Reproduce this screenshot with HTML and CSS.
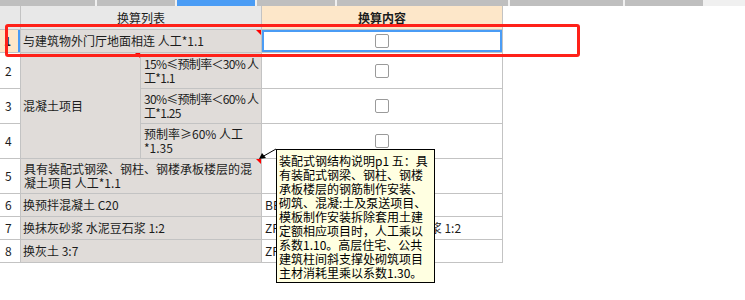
FILE: index.html
```html
<!DOCTYPE html>
<html>
  <head>
    <title>换算</title>
    <link rel="stylesheet" href="styles.css">
  </head>
  <body>
    <div class="tabs">
      <span class="tab t1"></span>
      <span class="tab t2"></span>
      <span class="tab t2 active"></span>
      <span class="tab t2"></span>
      <span class="tab t3"></span>
      <span class="tab t4"></span>
      <span class="tab t2"></span>
    </div>

    <div class="sheet">
      <div class="grid">
        <div class="hd"></div>
        <div class="hd span2 center">换算列表</div>
        <div class="hd hd-warm center bold">换算内容</div>

        <div class="no no-cur">1</div>
        <div class="cell span2 flag">与建筑物外门厅地面相连 人工*1.1</div>
        <div class="val val-cur"><span class="chk"></span></div>

        <div class="no">2</div>
        <div class="cell rows3 flag">混凝土项目</div>
        <div class="cell two tight">15%≤预制率＜30% 人<br>工*1.1</div>
        <div class="val"><span class="chk"></span></div>

        <div class="no">3</div>
        <div class="cell two tight">30%≤预制率＜60% 人<br>工*1.25</div>
        <div class="val"><span class="chk"></span></div>

        <div class="no">4</div>
        <div class="cell two">预制率≥60% 人工<br>*1.35</div>
        <div class="val"><span class="chk"></span></div>

        <div class="no">5</div>
        <div class="cell span2 two flag">具有装配式钢梁、钢柱、钢楼承板楼层的混<br>凝土项目 人工*1.1</div>
        <div class="val"><span class="chk"></span></div>

        <div class="no">6</div>
        <div class="cell span2">换预拌混凝土 C20</div>
        <div class="val txt">BB1-0021 C20</div>

        <div class="no">7</div>
        <div class="cell span2">换抹灰砂浆 水泥豆石浆 1:2</div>
        <div class="val txt">ZF1-0016 换抹灰砂浆 水泥豆石浆 1:2</div>

        <div class="no">8</div>
        <div class="cell span2">换灰土 3:7</div>
        <div class="val txt">ZF1-0049 灰土 3:7</div>
      </div>

      <div class="mark"></div>

      <svg class="pointer" width="22" height="16" viewBox="0 0 22 16">
        <line x1="20" y1="3" x2="6" y2="11" stroke="#000" stroke-width="1"/>
        <polygon points="3,13 6,7 10,12" fill="#000"/>
      </svg>

      <div class="tip">装配式钢结构说明p1 五：具<br>有装配式钢梁、钢柱、钢楼<br>承板楼层的钢筋制作安装、<br>砌筑、混凝:土及泵送项目、<br>模板制作安装拆除套用土建<br>定额相应项目时，人工乘以<br>系数1.10。高层住宅、公共<br>建筑柱间斜支撑处砌筑项目<br>主材消耗里乘以系数1.30。</div>
    </div>
  </body>
</html>
```

FILE: styles.css
```css
body { margin: 0; font-family: "Noto Sans CJK SC", sans-serif; font-size: 12px; color: #1c1c1c; background: #fff; }

.tabs { display: flex; gap: 2px; height: 6px; background: #f0f0f0; }
.tab { background: #bfbfbf; }
.tab.active { background: #4a9cf5; }
.t1 { width: 95px; }
.t2 { width: 78px; }
.t3 { width: 171px; }
.t4 { width: 113px; }

.sheet { position: relative; min-height: 294px; }

.grid {
  display: grid;
  grid-template-columns: 20px 119px 120px 240px;
  grid-template-rows: 23px 22px 35px 34px 34px 34px 22px 22px 22px;
  gap: 1px;
  width: 502px;
  background: #c3c3c3;
  border-right: 1px solid #c3c3c3;
  border-bottom: 1px solid #c3c3c3;
}
.grid > div { display: flex; align-items: center; line-height: 14px; white-space: nowrap; overflow: hidden; }

.hd { background: #e8e8e8; }
.hd-warm { background: #fde7c9; }
.center { justify-content: center; }
.bold { font-weight: bold; }
.span2 { grid-column: span 2; }
.rows3 { grid-row: span 3; }

.no { background: #fff; padding-left: 5px; }
.no-cur { background: #fde7c9; font-weight: bold; padding-left: 4px; box-shadow: inset -2px 0 #4a9cf5; }

.cell { background: #e0dcd9; padding-left: 2px; position: relative; }
.cell.two { padding-left: 3px; }
.cell.tight { letter-spacing: -0.7px; }
.flag::after { content: ""; position: absolute; top: 0; right: 0; border-top: 5px solid #f00; border-left: 5px solid transparent; }

.val { background: #fff; justify-content: center; }
.val-cur { box-shadow: inset 0 0 0 2px #4a9cf5; }
.val.txt { justify-content: flex-start; padding-left: 3px; }
.chk { width: 12px; height: 12px; border: 1px solid #9a9a9a; border-radius: 2px; background: #fff; }

.mark { position: absolute; left: 5px; top: 18px; width: 569px; height: 27px; border: 3px solid #ff2119; border-radius: 3px; }

.pointer { position: absolute; left: 256px; top: 140px; }

.tip {
  position: absolute; left: 276px; top: 143px;
  width: 154px; padding: 4px 1px 2px 2px;
  background: #ffffe1; border: 1px solid #000;
  line-height: 14px; white-space: nowrap; color: #000;
}
```
